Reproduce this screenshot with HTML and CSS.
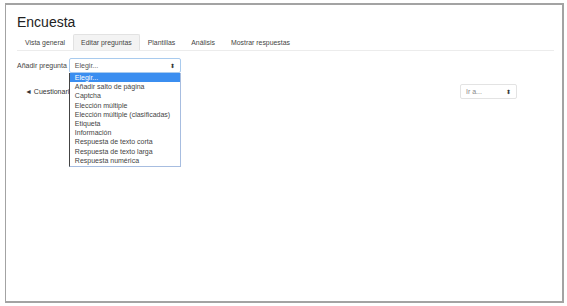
FILE: index.html
```html
<!DOCTYPE html>
<html lang="es">
<head>
  <meta charset="UTF-8">
  <title>Encuesta</title>
  <link rel="stylesheet" href="styles.css">
</head>
<body>
  <div class="frame">
    <div class="page">
      <h1>Encuesta</h1>

      <ul class="tabs">
        <li>Vista general</li>
        <li class="active">Editar preguntas</li>
        <li>Plantillas</li>
        <li>Análisis</li>
        <li>Mostrar respuestas</li>
      </ul>

      <div class="add-row">
        <label>Añadir pregunta</label>
        <div class="select-wrap">
          <div class="select focused">
            <span>Elegir...</span>
            <span class="arrows">&#x2B0D;</span>
          </div>
          <ul class="dropdown">
            <li class="selected">Elegir...</li>
            <li>Añadir salto de página</li>
            <li>Captcha</li>
            <li>Elección múltiple</li>
            <li>Elección múltiple (clasificadas)</li>
            <li>Etiqueta</li>
            <li>Información</li>
            <li>Respuesta de texto corta</li>
            <li>Respuesta de texto larga</li>
            <li>Respuesta numérica</li>
          </ul>
        </div>
      </div>

      <div class="nav-row">
        <a class="back">&#9668; Cuestionario</a>
        <div class="select small">
          <span class="muted">Ir a...</span>
          <span class="arrows">&#x2B0D;</span>
        </div>
      </div>
    </div>
  </div>
</body>
</html>
```

FILE: styles.css
```css
html, body {
  margin: 0;
  height: 100%;
  background: #ffffff;
}
body {
  font-family: "Liberation Sans", Arial, sans-serif;
  color: #333;
  padding: 3px 3px 3px 5px;
  box-sizing: border-box;
}
.frame {
  height: 100%;
  box-sizing: border-box;
  border: 2px solid #a3a3a3;
  border-left-width: 1px;
}
.page {
  padding: 9px 8px 0 11px;
}
h1 {
  margin: 0;
  font-size: 14px;
  line-height: 16px;
  font-weight: normal;
  color: #222;
}
.tabs {
  list-style: none;
  margin: 4px 0 0;
  padding: 0;
  display: flex;
  border-bottom: 1px solid #ececec;
}
.tabs li {
  font-size: 6.9px;
  line-height: 15px;
  padding: 0 7px;
  color: #444;
  border: 1px solid transparent;
  border-bottom: none;
  border-radius: 2px 2px 0 0;
}
.tabs li.active {
  background: #f3f3f3;
  border-color: #e2e2e2;
}
.add-row {
  display: flex;
  align-items: center;
  margin-top: 7px;
  font-size: 7px;
}
.add-row label {
  color: #444;
  margin-right: 2px;
}
.select-wrap {
  position: relative;
}
.select {
  display: flex;
  justify-content: space-between;
  align-items: center;
  box-sizing: border-box;
  height: 15px;
  width: 112px;
  padding: 0 5px;
  font-size: 7px;
  color: #555;
  border: 1px solid #d6d6d6;
  border-radius: 2px;
  background: #fff;
}
.select.focused {
  border-color: #a9cbee;
}
.arrows {
  font-size: 6px;
  color: #333;
}
.dropdown {
  position: absolute;
  left: 0;
  top: 15px;
  width: 112px;
  box-sizing: border-box;
  margin: 0;
  padding: 0 0 1px;
  list-style: none;
  background: #fff;
  border: 1px solid #a7bde0;
  border-left-color: #444;
  border-top: none;
  font-size: 7px;
  z-index: 2;
}
.dropdown li {
  line-height: 9.2px;
  padding: 0 5px;
  color: #444;
  white-space: nowrap;
}
.dropdown li.selected {
  background: #3b8ef0;
  color: #fff;
}
.nav-row {
  display: flex;
  justify-content: space-between;
  align-items: center;
  margin-top: 11px;
  padding: 0 37px 0 8px;
  font-size: 7px;
}
.back {
  color: #333;
}
.select.small {
  width: 57px;
  border-color: #e3e3e3;
}
.muted {
  color: #888;
}
```
